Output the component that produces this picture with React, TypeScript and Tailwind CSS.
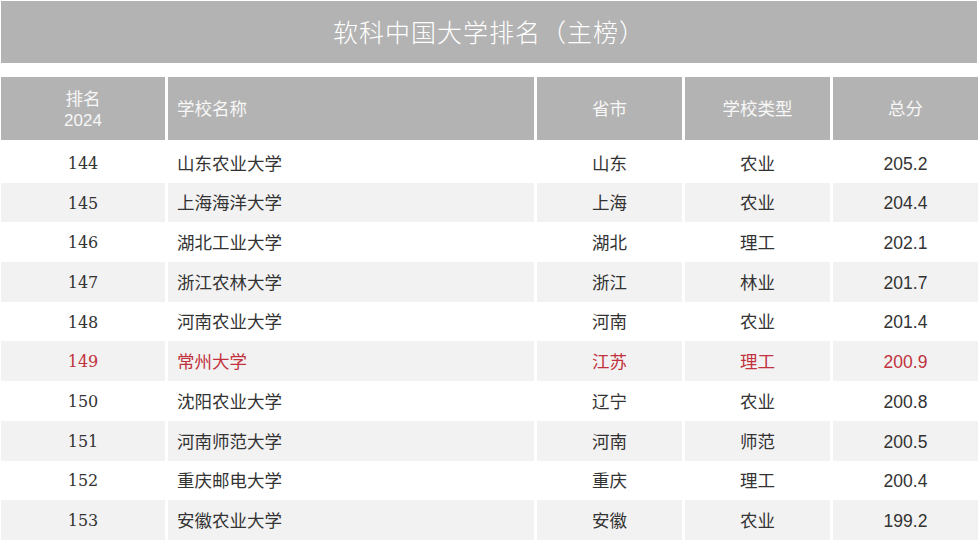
const rows = [
  { rank: 144, name: '山东农业大学', prov: '山东', type: '农业', score: '205.2' },
  { rank: 145, name: '上海海洋大学', prov: '上海', type: '农业', score: '204.4' },
  { rank: 146, name: '湖北工业大学', prov: '湖北', type: '理工', score: '202.1' },
  { rank: 147, name: '浙江农林大学', prov: '浙江', type: '林业', score: '201.7' },
  { rank: 148, name: '河南农业大学', prov: '河南', type: '农业', score: '201.4' },
  { rank: 149, name: '常州大学', prov: '江苏', type: '理工', score: '200.9', hl: true },
  { rank: 150, name: '沈阳农业大学', prov: '辽宁', type: '农业', score: '200.8' },
  { rank: 151, name: '河南师范大学', prov: '河南', type: '师范', score: '200.5' },
  { rank: 152, name: '重庆邮电大学', prov: '重庆', type: '理工', score: '200.4' },
  { rank: 153, name: '安徽农业大学', prov: '安徽', type: '农业', score: '199.2' },
];

const cjk = "font-['Noto_Sans_CJK_SC',sans-serif]";

export default function App() {
  return (
    <div className="w-[980px] h-[540px] overflow-hidden bg-white pl-px pt-px">
      <div className={`w-[976px] h-[62px] bg-[#b3b3b3] flex items-center justify-center text-white text-[25px] tracking-[1px] font-light ${cjk}`}>
        软科中国大学排名（主榜）
      </div>

      <div className="mt-[14px] w-[977px]">
        <div className={`grid grid-cols-[164px_366px_145px_145px_145px] gap-x-[3px] h-[63px] text-[#f7f7f7] text-[17.5px] ${cjk}`}>
          <div className="bg-[#b3b3b3] flex flex-col items-center justify-center leading-[23px]">
            <span>排名</span>
            <span className="font-['Liberation_Sans',sans-serif] text-[17px]">2024</span>
          </div>
          <div className="bg-[#b3b3b3] flex items-center pl-[9px]">学校名称</div>
          <div className="bg-[#b3b3b3] flex items-center justify-center">省市</div>
          <div className="bg-[#b3b3b3] flex items-center justify-center">学校类型</div>
          <div className="bg-[#b3b3b3] flex items-center justify-center">总分</div>
        </div>

        <div className="mt-[3px]">
          {rows.map((r, i) => {
            const bg = i % 2 === 1 ? 'bg-[#f2f2f2]' : 'bg-white';
            const color = r.hl ? 'text-[#c1323e]' : 'text-[#333333]';
            return (
              <div
                key={r.rank}
                className={`grid grid-cols-[164px_366px_145px_145px_145px] gap-x-[3px] h-[39.7px] text-[17.5px] ${color} ${cjk}`}
              >
                <div className={`${bg} flex items-center justify-center pt-[2px] font-['DejaVu_Serif',serif] text-[16px]`}>{r.rank}</div>
                <div className={`${bg} flex items-center pl-[9px]`}>{r.name}</div>
                <div className={`${bg} flex items-center justify-center`}>{r.prov}</div>
                <div className={`${bg} flex items-center justify-center`}>{r.type}</div>
                <div className={`${bg} flex items-center justify-center pt-[2px] font-['Liberation_Sans',sans-serif] text-[17.5px]`}>{r.score}</div>
              </div>
            );
          })}
        </div>
      </div>
    </div>
  );
}
